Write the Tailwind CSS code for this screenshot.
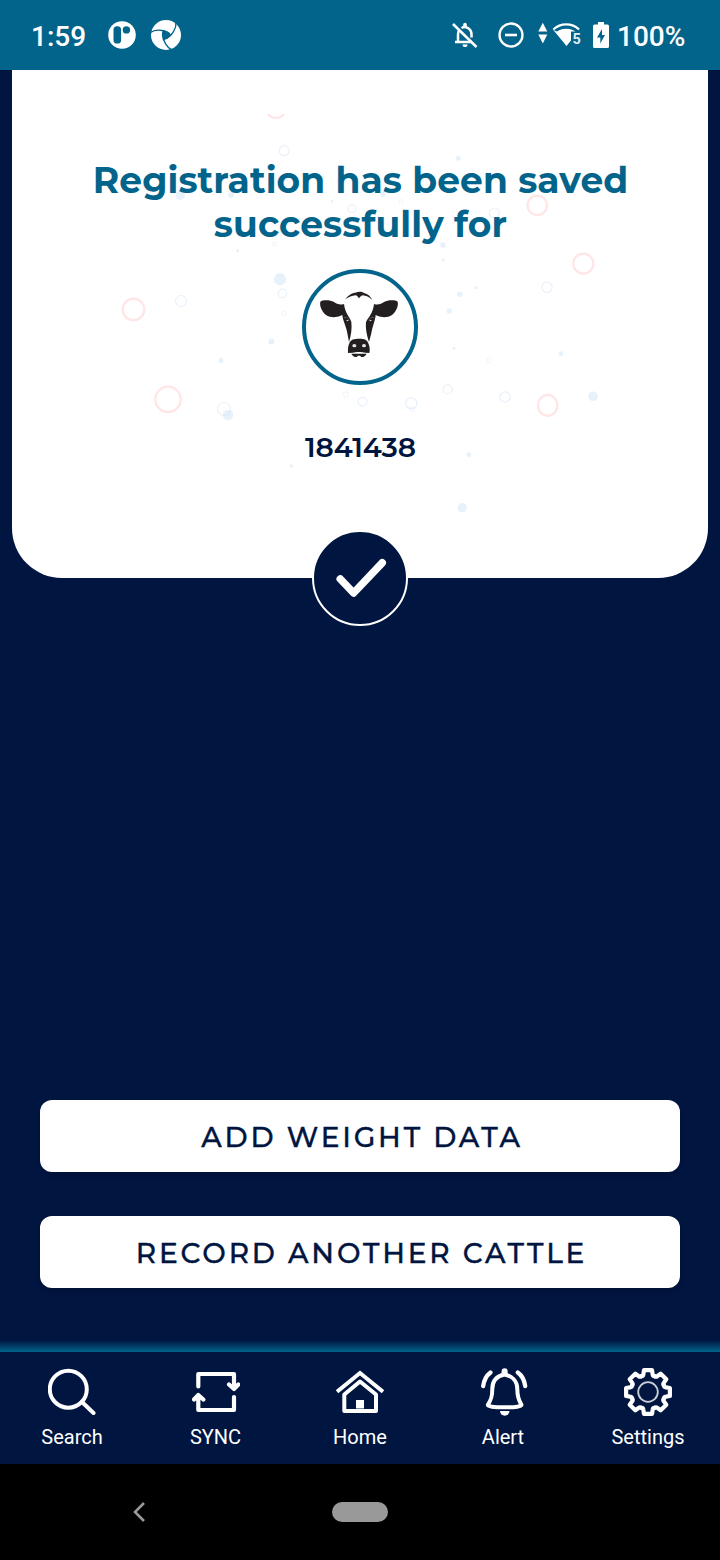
<!DOCTYPE html>
<html lang="en">
<head>
<meta charset="utf-8">
<title>Registration saved</title>
<script src="https://cdn.jsdelivr.net/npm/@tailwindcss/browser@4"></script>
</head>
<body class="bg-black">
<div class="flex h-[1560px] w-[720px] flex-col overflow-hidden bg-[#001540] font-['Roboto',sans-serif] text-white">

  <header class="flex h-[70px] shrink-0 items-center bg-[#02648b] pl-[31px]">
    <span class="w-[54px] pt-[3px] text-[28px] leading-8 font-medium whitespace-nowrap">1:59</span>
    <svg class="ml-[23px] h-7 w-7" viewBox="0 0 28 28"><circle cx="14" cy="14" r="13.8" fill="#fff"/><rect x="5.5" y="5.2" width="7.6" height="17.3" rx="3.6" fill="#02648b"/><circle cx="18.4" cy="8.9" r="3.7" fill="#02648b"/></svg>
    <svg class="ml-[15px] h-[30px] w-[30px]" viewBox="0 0 30 30"><defs><path id="blade" d="M-0.500 12.500C3 10 11 8.500 18.500 13.500"/></defs><circle cx="15" cy="15" r="15" fill="#fff"/><g fill="none" stroke="#02648b" stroke-width="1.300"><use href="#blade"/><use href="#blade" transform="rotate(120 15 15)"/><use href="#blade" transform="rotate(240 15 15)"/></g><path d="M11.300 10.300Q17 10.500 20.500 15Q17.500 19 12 20.500Q10 15 11.300 10.300Z" fill="#02648b"/></svg>

    <div class="ml-auto flex items-center pr-[35px]">
      <svg class="h-[26px] w-[26px]" viewBox="0 0 26 26" fill="none" stroke="#fff" stroke-width="2.500"><path d="M7 8.500C6 10 6 11 6 13V19.500M3 20H20M9.500 6C13 4 19 5.500 19.500 12V15.500"/><path d="M13 2.500V4.500" stroke-width="3.600" stroke-linecap="round"/><path d="M10.500 22.500H15.500A2.500 2.500 0 0 1 10.500 22.500Z" fill="#fff" stroke="none"/><path d="M1 2L24.500 25"/></svg>
      <svg class="ml-[20px] h-[26px] w-[26px]" viewBox="0 0 26 26" fill="none" stroke="#fff"><circle cx="13" cy="13" r="11.500" stroke-width="2.300"/><path d="M7 13H19" stroke-width="2.600"/></svg>
      <svg class="ml-[14px] h-[26px] w-[44px]" viewBox="0 0 44 26"><path d="M0.300 9.500L4.800 0.800L9.300 9.500ZM0.300 12.500H9.300L4.800 21.500Z" fill="#fff"/><path d="M15.500 7.500C22.500 0.700 34 0.700 41 7.500" fill="none" stroke="#fff" stroke-width="2.300"/><path d="M14.500 7L28.500 24L33 18.500V9.500H37.500C31.500 5.500 24.500 5.500 19 9.500" fill="#fff"/><path d="M16 8C22 3.200 34 3.200 40 8L39 9.200C33.500 5.800 23.500 5.800 17.500 9.200Z" fill="#02648b" opacity=".65"/><text x="34.500" y="21.800" font-family="Roboto" font-size="14.500" font-weight="700" fill="#fff" fill-opacity=".9">5</text></svg>
      <svg class="ml-[11px] h-[26px] w-4" viewBox="0 0 16 26"><path d="M5 0H11V2.500H14.500Q16 2.500 16 4V24.500Q16 26 14.500 26H1.500Q0 26 0 24.500V4Q0 2.500 1.500 2.500H5Z" fill="#fff"/><path d="M9 7L4 15.500H7.300V21.500L12 13H9Z" fill="#02648b"/></svg>
      <span class="ml-2 w-[68px] pt-[3px] text-[28px] leading-8 font-medium whitespace-nowrap">100%</span>
    </div>
  </header>

  <main class="flex min-h-0 flex-1 flex-col">
    <section class="relative mx-3 flex h-[508px] shrink-0 flex-col items-center rounded-b-[50px] bg-white">
      <!-- confetti -->
      <svg class="absolute inset-0 h-[508px] w-[696px]" viewBox="12 70 696 508">
        <defs><clipPath id="top"><rect x="12" y="114" width="696" height="464"/></clipPath></defs>
        <g fill="none" stroke="#ffe5e5" stroke-width="2.200" clip-path="url(#top)">
          <circle cx="276" cy="108" r="10"/><circle cx="537.300" cy="205.300" r="9.700"/><circle cx="133.500" cy="309.500" r="10.800"/><circle cx="168" cy="399.400" r="12.700"/><circle cx="583.300" cy="263.600" r="10"/><ellipse cx="547.700" cy="405.300" rx="9.600" ry="10.500"/>
        </g>
        <g fill="none" stroke="#e8f1fa" stroke-width="1.200">
          <circle cx="284.300" cy="150.700" r="5"/><circle cx="352" cy="208.700" r="4"/><circle cx="494.300" cy="213" r="5"/><circle cx="181" cy="301" r="5.500"/><circle cx="282.400" cy="293.300" r="4.200"/><circle cx="224" cy="409" r="6.500"/><circle cx="362.600" cy="401.800" r="4.400"/><circle cx="547" cy="287.300" r="5.200"/><circle cx="447.700" cy="389.400" r="4.500"/><circle cx="411.300" cy="403.400" r="5.500"/><circle cx="505" cy="397" r="5.100"/>
        </g>
        <g fill="none" stroke="#e8f1fa" stroke-width=".8">
          <circle cx="274.300" cy="243.700" r="2"/><circle cx="401.300" cy="201.700" r="2"/><circle cx="283.700" cy="313.500" r="2.300"/><circle cx="346" cy="394.600" r="2.700"/><circle cx="488.700" cy="360.400" r="2.300"/><circle cx="412.300" cy="409" r="2.300"/>
        </g>
        <g fill="#c6ddf2" fill-opacity=".42">
          <circle cx="180.300" cy="195.300" r="4.700"/><circle cx="231" cy="195" r="3"/><circle cx="331.700" cy="201.300" r="1.400"/><circle cx="237.700" cy="250.700" r="1.600"/><circle cx="458.300" cy="158.300" r="2.500"/><circle cx="383" cy="194.300" r="2.600"/><circle cx="443" cy="245" r="2.700"/><circle cx="443.300" cy="259.700" r="1.500"/><circle cx="280" cy="279.300" r="6"/><circle cx="271.300" cy="341.400" r="3"/><circle cx="221" cy="360.400" r="2.500"/><circle cx="228" cy="415" r="5.200"/><circle cx="291.400" cy="466" r="1.800"/><circle cx="476.300" cy="287.700" r="1.500"/><circle cx="459.700" cy="294.300" r="2.700"/><circle cx="449.300" cy="311" r="2.700"/><circle cx="454" cy="348.300" r="1.500"/><circle cx="561" cy="353.700" r="2.400"/><circle cx="593" cy="396.300" r="4.800"/><circle cx="469" cy="454.700" r="2.400"/><circle cx="462.300" cy="507.700" r="4.700"/>
        </g>
      </svg>

      <h1 class="relative mt-[88px] w-[601px] pl-px text-center font-['Montserrat','Inter',sans-serif] text-[36px] leading-[44px] font-bold tracking-[0.1px] whitespace-nowrap text-[#02648b]">Registration has been saved<br>successfully for</h1>

      <svg class="relative mt-[23px] h-[116px] w-[116px]" viewBox="36 27 348 348">
        <circle cx="210" cy="201" r="168" fill="#fff" stroke="#02648b" stroke-width="12"/>
        <g fill="#231f20">
          <path d="M162 132C150 136 140 132 132 126C120 119 98 119 91 125C88 138 96 155 108 165C120 173 138 173 150 168L157 165C158 180 169 200 172 220L177 246C184 225 186 204 184 186C179 170 165 160 162 132Z"/>
          <path d="M252 132C264 136 274 132 282 126C294 119 316 119 323 125C326 138 318 155 306 165C294 173 276 173 264 168L257 165C256 180 247 200 244 220L237 246C230 225 226 204 228 186C236 170 249 160 252 132Z"/>
          <path d="M166 118C174 105 188 98 196 98C204 94 216 94 222 99C234 102 242 110 247 120C238 111 228 107 218 106L213 108L207 115L201 107L197 106C186 107 176 111 166 118Z"/>
          <path d="M178 250C182 238 192 236 208 236C224 236 232 240 235 250C240 262 240 272 238 279L226 278C218 275 196 275 188 278L174 279C174 268 173 260 178 250Z"/>
          <path d="M184 281H230C226 288 220 292 214 291L210 287L204 287L200 291C192 291 188 288 184 281Z"/>
        </g>
        <g fill="#e5e5e5"><ellipse cx="193" cy="257" rx="6" ry="5"/><ellipse cx="222" cy="257" rx="6" ry="5"/><path d="M168 180L176 180L173 184ZM246 180L238 180L241 184Z"/></g>
        <g fill="none" stroke="#8b815f" stroke-width="1.800"><path d="M162 173Q169 168 176 178V183M252 173Q245 168 238 178V183"/></g>
      </svg>

      <p class="relative mt-[46px] pl-px font-['Montserrat','Inter',sans-serif] text-[28px] leading-8 font-semibold text-[#001540]">1841438</p>

      <svg class="absolute bottom-[-48px] left-[300px] h-24 w-24" viewBox="0 0 96 96"><circle cx="48" cy="48" r="47" fill="#001540" stroke="#fff" stroke-width="2"/><path d="M28.300 49L41.600 63L70.200 32.800" fill="none" stroke="#fff" stroke-width="7.600" stroke-linecap="round" stroke-linejoin="round"/></svg>
    </section>

    <div class="mt-auto flex flex-col gap-11 px-10 pb-[52px] font-['Montserrat','Inter',sans-serif] text-[28px] font-medium tracking-[2.8px] text-[#001540] [-webkit-text-stroke:0.35px_#001540]">
      <button class="flex h-[72px] items-center justify-center rounded-xl bg-white pt-[2px] pl-1 whitespace-nowrap shadow-md">ADD WEIGHT DATA</button>
      <button class="flex h-[72px] items-center justify-center rounded-xl bg-white pt-[2px] pl-[3px] whitespace-nowrap shadow-md">RECORD ANOTHER CATTLE</button>
    </div>
    <div class="h-3 shrink-0 bg-linear-to-b from-[#001540] to-[#02648b]"></div>
  </main>

  <nav class="grid h-28 shrink-0 grid-cols-5 pt-4 text-[20px] leading-6">
    <a class="flex flex-col items-center gap-[9px]">
      <svg class="h-12 w-12" viewBox="0 0 48 48" fill="none" stroke="#fff" stroke-width="4" stroke-linecap="round"><circle cx="20.300" cy="21.200" r="18.500"/><path d="M34 34L45.500 45"/></svg>
      <span>Search</span>
    </a>
    <a class="flex flex-col items-center gap-[9px]">
      <svg class="h-12 w-12" viewBox="0 0 48 48" fill="none" stroke="#fff" stroke-width="4.200" stroke-linecap="round" stroke-linejoin="round"><path d="M6.300 18.500V6H42V20.500M37 16.500L42 21L46.300 16.500M42 29V42H6.300V28M2 31.500L6.300 27L11.300 31.500"/></svg>
      <span class="-ml-px">SYNC</span>
    </a>
    <a class="flex flex-col items-center gap-[9px]">
      <svg class="h-12 w-12" viewBox="0 0 48 48" fill="none" stroke="#fff" stroke-width="4"><path d="M1 23.800L24 5L47 23.800"/><path d="M8.300 43V26.500L24 13.500L40 26.500V43Z" stroke-linejoin="round"/><rect x="20" y="32" width="8" height="8.500" fill="#fff" stroke="none"/></svg>
      <span>Home</span>
    </a>
    <a class="flex flex-col items-center gap-[9px]">
      <svg class="h-12 w-12" viewBox="0 0 48 48" fill="none" stroke="#fff" stroke-width="4" stroke-linecap="round" stroke-linejoin="round"><path d="M24.600 6.500C17 8 12.300 13 12.300 21C12.300 29 11 32 8 36.500C7 38.500 14 39.300 24.600 39.300S42.500 38.500 41.300 36.500C38.500 32 37.300 29 37.300 21C37.300 13 32 8 24.600 6.500Z"/><path d="M24.600 3.200V5" stroke-width="6"/><path d="M3.200 18C4 12 6.500 7.500 10.500 4.500M45.200 18C44.400 12 42 7.500 37.800 4.500" stroke-width="4.300"/><path d="M20 43H29.500A4.700 4.700 0 0 1 20 43Z" fill="#fff" stroke="none"/></svg>
      <span class="-ml-[2px]">Alert</span>
    </a>
    <a class="flex flex-col items-center gap-[9px]">
      <svg class="h-12 w-12" viewBox="-24 -24 48 48" fill="none" stroke="#fff" stroke-width="4.200" stroke-linecap="round" stroke-linejoin="round"><defs><path id="tooth" d="M-6.600 -15.900Q-4.800 -16 -4.600 -18L-4 -21.900H4L4.600 -18Q4.800 -16 6.600 -15.900"/></defs>
        <use href="#tooth"/><use href="#tooth" transform="rotate(45)"/><use href="#tooth" transform="rotate(90)"/><use href="#tooth" transform="rotate(135)"/><use href="#tooth" transform="rotate(180)"/><use href="#tooth" transform="rotate(225)"/><use href="#tooth" transform="rotate(270)"/><use href="#tooth" transform="rotate(315)"/><circle r="9.800" stroke-width="1.800" stroke-opacity=".8"/></svg>
      <span>Settings</span>
    </a>
  </nav>

  <footer class="grid h-24 shrink-0 grid-cols-5 items-center justify-items-center bg-black">
    <svg class="col-start-1 ml-[133px] h-5 w-3" viewBox="0 0 12 20" fill="none" stroke="#999" stroke-width="2.600"><path d="M11 1L2 10L11 19"/></svg>
    <span class="col-start-3 h-5 w-14 rounded-full bg-[#999]"></span>
  </footer>
</div>
</body>
</html>
